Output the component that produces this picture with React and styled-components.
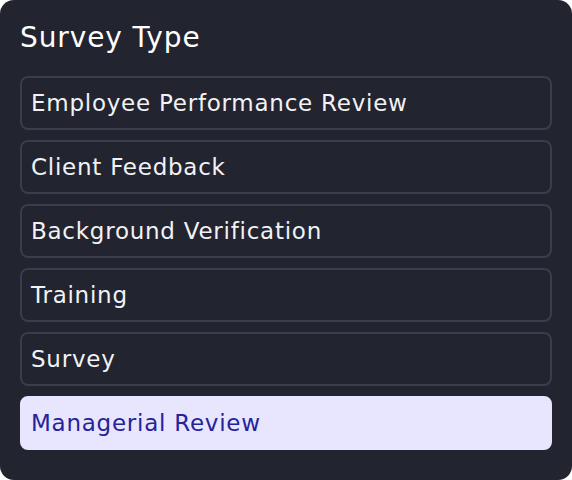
import React from "react";
import styled, { createGlobalStyle } from "styled-components";

const Global = createGlobalStyle`
  html, body { margin: 0; padding: 0; background: #ffffff; }
  * { box-sizing: border-box; }
`;

const Card = styled.div`
  width: 572px;
  height: 480px;
  background: #222430;
  border-radius: 14px;
  padding: 20px 20px 30px;
  display: flex;
  flex-direction: column;
  font-family: "DejaVu Sans", sans-serif;
`;

const Title = styled.h2`
  margin: 0 0 20px;
  height: 36px;
  line-height: 36px;
  font-size: 28px;
  letter-spacing: 0.9px;
  font-weight: 400;
  color: #ffffff;
`;

const List = styled.div`
  display: flex;
  flex-direction: column;
  gap: 10px;
`;

const Option = styled.div`
  height: 54px;
  border-radius: 8px;
  border: 2px solid ${(p) => (p.$selected ? "#e8e6ff" : "#3a3d4a")};
  background: ${(p) => (p.$selected ? "#e8e6ff" : "transparent")};
  color: ${(p) => (p.$selected ? "#25239c" : "#f2f2f4")};
  display: flex;
  align-items: center;
  padding-left: 9px;
  font-size: 23px;
  letter-spacing: 0.75px;
`;

const options = [
  "Employee Performance Review",
  "Client Feedback",
  "Background Verification",
  "Training",
  "Survey",
  "Managerial Review",
];

export default function App() {
  return (
    <>
      <Global />
      <Card>
        <Title>Survey Type</Title>
        <List>
          {options.map((o) => (
            <Option key={o} $selected={o === "Managerial Review"}>
              {o}
            </Option>
          ))}
        </List>
      </Card>
    </>
  );
}
